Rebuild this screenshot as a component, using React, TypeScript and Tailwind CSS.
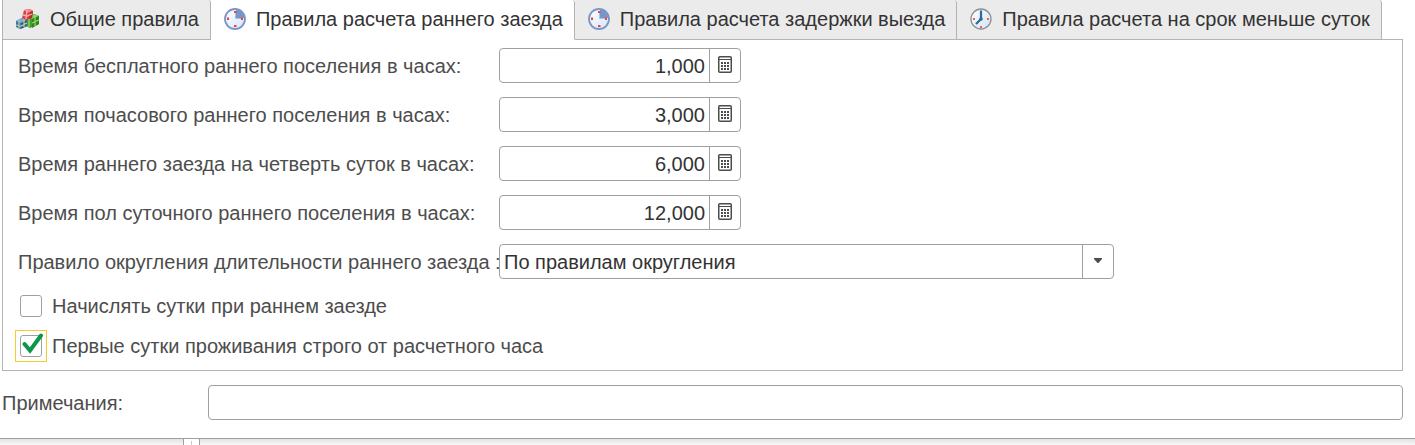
import { useState } from 'react';
import clsx from 'clsx';

const BlocksIcon = () => (
  <svg width="24" height="22" viewBox="0 0 24 22" className="shrink-0" aria-hidden="true">
    <path d="M10 9l8-3 5 2v8l-9 4-4-2z" fill="#3c9f32" />
    <path d="M10 9l8-3 5 2-7 3z" fill="#7fd468" />
    <path d="M16 11l7-3v8l-7 4z" fill="#2b8427" />
    <path d="M19 7v11M16 15l7-3M13 8v11" stroke="#a4d85a" strokeWidth="1.200" fill="none" />
    <path d="M0 13l6-3 5 2v6l-7 3-4-2z" fill="#3f73b3" />
    <path d="M0 13l6-3 5 2-6 3z" fill="#7fabd9" />
    <path d="M5 15l6-3v6l-6 3z" fill="#2b5c9e" />
    <path d="M3 12v8M0 17l5 1 6-3M8 11v8" stroke="#b9cf8e" strokeWidth="1.200" fill="none" />
    <path d="M8 2l6-1 3 2-1 7-6 2-4-2z" fill="#d9414a" />
    <path d="M8 2l6-1 3 2-6 2z" fill="#f08a90" />
    <path d="M14 4l3-1-1 7-3 1z" fill="#b52b36" />
    <path d="M11 2l-1 9M7 7l4 1 5-2" stroke="#f3b69c" strokeWidth="1.300" fill="none" />
  </svg>
);

const QuarterClockIcon = () => (
  <svg width="22" height="22" viewBox="0 0 22 22" className="shrink-0" aria-hidden="true">
    <defs>
      <linearGradient id="quarterFace" x1="0" y1="0" x2="1" y2="1">
        <stop offset="0" stopColor="#ffffff" />
        <stop offset="1" stopColor="#d5e5fb" />
      </linearGradient>
    </defs>
    <circle cx="11" cy="11" r="10" fill="url(#quarterFace)" stroke="#7896c8" strokeWidth="1.800" />
    <path d="M12 1.500A9.500 9.500 0 0 1 20.500 10H12z" fill="#7797cb" />
    <path d="M11.500 4v6.500H18" fill="none" stroke="#a9c0e5" />
    <path d="M10 3h2.500v2H10zM17 9.500h2v2.500h-2zM10 17h2.500v2H10zM3 9.500h2V12H3z" fill="#f4422e" />
  </svg>
);

const ClockIcon = () => (
  <svg width="22" height="22" viewBox="0 0 22 22" className="shrink-0" aria-hidden="true">
    <defs>
      <linearGradient id="clockFace" x1="0" y1="0" x2="1" y2="1">
        <stop offset="0" stopColor="#ffffff" />
        <stop offset="1" stopColor="#d3e2ee" />
      </linearGradient>
    </defs>
    <circle cx="11" cy="11" r="10" fill="url(#clockFace)" stroke="#87919b" strokeWidth="1.300" />
    <path d="M11 2.500V11l-5 5" fill="none" stroke="#2f6899" strokeWidth="2.200" />
    <circle cx="11" cy="11" r="1.800" fill="#2f6899" />
    <path d="M17 10h2v2h-2zM10 18h2v2h-2zM3 10h2v2H3z" fill="#f0604f" />
  </svg>
);

const CalculatorIcon = () => (
  <svg width="14" height="17" viewBox="0 0 14 17" aria-hidden="true">
    <rect x="0.750" y="0.750" width="12.500" height="15.500" rx="1" fill="none" stroke="#4d4d4d" strokeWidth="1.500" />
    <path d="M1 3.500h12" stroke="#4d4d4d" />
    <path
      d="M3 6h2v2H3zM6 6h2v2H6zM9 6h2v2H9zM3 9h2v2H3zM6 9h2v2H6zM9 9h2v2H9zM3 12h2v2H3zM6 12h2v2H6zM9 12h2v2H9z"
      fill="#4d4d4d"
    />
  </svg>
);

const tabs = [
  { id: 'common', title: 'Общие правила', Icon: BlocksIcon },
  { id: 'early', title: 'Правила расчета раннего заезда', Icon: QuarterClockIcon },
  { id: 'late', title: 'Правила расчета задержки выезда', Icon: QuarterClockIcon },
  { id: 'short', title: 'Правила расчета на срок меньше суток', Icon: ClockIcon },
];

const hourFields = [
  { id: 'free', label: 'Время бесплатного раннего поселения в часах:', value: '1,000' },
  { id: 'hourly', label: 'Время почасового раннего поселения в часах:', value: '3,000' },
  { id: 'quarter', label: 'Время раннего заезда на четверть суток в часах:', value: '6,000' },
  { id: 'half', label: 'Время пол суточного раннего поселения в часах:', value: '12,000' },
];

type CheckProps = {
  label: string;
  checked: boolean;
  focused?: boolean;
  onChange: (value: boolean) => void;
};

const Check = ({ label, checked, focused, onChange }: CheckProps) => (
  <label className="flex h-8 items-center gap-[5px]">
    <span
      className={clsx(
        'relative flex size-8 items-center justify-center border',
        focused ? 'border-[#f7cb2d]' : 'border-transparent',
      )}
    >
      <input
        type="checkbox"
        checked={checked}
        onChange={e => onChange(e.target.checked)}
        className="size-[22px] appearance-none rounded-[3px] border border-[#a0a0a0] bg-white outline-none"
      />
      {checked && (
        <svg
          width="22"
          height="22"
          viewBox="0 0 22 22"
          className="pointer-events-none absolute top-[2px] left-[6px]"
          aria-hidden="true"
        >
          <path d="M2.500 11l5.500 6.500L19 2.500" fill="none" stroke="#0b9748" strokeWidth="4" strokeLinecap="round" />
        </svg>
      )}
    </span>
    {label}
  </label>
);

const App = () => {
  const [active, setActive] = useState('early');
  const [chargeDay, setChargeDay] = useState(false);
  const [strictFirstDay, setStrictFirstDay] = useState(true);

  return (
    <div className="flex min-h-screen flex-col bg-white font-['Liberation_Sans',Arial,sans-serif] text-[20px] leading-6 text-[#4d4d4d]">
      <div className="pr-3 pl-[2px]">
        {/* Tabs overlap the panel border by one pixel */}
        <div role="tablist" className="flex">
          {tabs.map(({ id, title, Icon }, i) => (
            <button
              key={id}
              type="button"
              role="tab"
              aria-selected={active === id}
              onClick={() => setActive(id)}
              className={clsx(
                'relative -mb-px flex h-10 items-center gap-[10px] rounded-tr-[3px] border-r border-b border-[#b3b3b3] pr-[11px] pb-[2px] pl-[13px] whitespace-nowrap text-[#333333]',
                i === 0 && 'border-l',
                active === id ? 'border-b-white bg-white' : 'bg-[#ebebeb]',
              )}
            >
              <Icon />
              {title}
            </button>
          ))}
        </div>

        <div role="tabpanel" className="border border-[#b3b3b3] pt-2 pb-2 pl-3">
          <div className="flex flex-col gap-[14px] pl-[3px]">
            {hourFields.map(field => (
              <div key={field.id} className="flex items-center">
                <label htmlFor={field.id} className="w-[481px] shrink-0">
                  {field.label}
                </label>
                <div className="flex h-[35px] w-[242px] overflow-hidden rounded-[4px] border border-[#a0a0a0]">
                  <input
                    id={field.id}
                    defaultValue={field.value}
                    className="min-w-0 flex-1 pr-1 text-right text-[#333333] outline-none"
                  />
                  <button
                    type="button"
                    aria-label="Калькулятор"
                    className="flex w-[31px] items-center justify-center border-l border-[#a0a0a0] pb-[2px]"
                  >
                    <CalculatorIcon />
                  </button>
                </div>
              </div>
            ))}

            <div className="flex items-center">
              <label htmlFor="rounding" className="w-[481px] shrink-0 whitespace-nowrap">
                Правило округления длительности раннего заезда :
              </label>
              <div className="relative w-[615px]">
                <select
                  id="rounding"
                  className="h-[35px] w-full appearance-none rounded-[4px] border border-[#a0a0a0] bg-white pr-9 pl-1 text-[#333333] outline-none"
                >
                  <option>По правилам округления</option>
                </select>
                <span className="pointer-events-none absolute inset-y-0 right-0 flex w-8 items-center justify-center border-l border-[#a0a0a0] pr-[2px] pb-[2px]">
                  <svg width="8" height="5" viewBox="0 0 8 5" aria-hidden="true">
                    <path d="M0 0h8v1L4.500 5h-1L0 1z" fill="#4d4d4d" />
                  </svg>
                </span>
              </div>
            </div>
          </div>

          <div className="mt-[11px] flex flex-col gap-2">
            <Check label="Начислять сутки при раннем заезде" checked={chargeDay} onChange={setChargeDay} />
            <Check
              label="Первые сутки проживания строго от расчетного часа"
              checked={strictFirstDay}
              focused
              onChange={setStrictFirstDay}
            />
          </div>
        </div>

        <div className="mt-[14px] flex items-center">
          <label htmlFor="notes" className="w-[206px] shrink-0">
            Примечания:
          </label>
          <input
            id="notes"
            className="h-[35px] min-w-0 flex-1 rounded-[4px] border border-[#a0a0a0] px-1 text-[#333333] outline-none"
          />
        </div>
      </div>

      {/* Top edge of the status bar */}
      <div className="mt-[18px] flex flex-1 border-t border-[#a0a0a0] bg-linear-to-b from-[#e2e2e2] to-[#f8f8f8]">
        <div className="w-[183px]" />
        <div className="flex w-[17px] justify-center border-x border-[#a0a0a0] bg-white">
          <div className="mt-[2px] w-px bg-[#c8c8c8]" />
        </div>
      </div>
    </div>
  );
};

export default App;
